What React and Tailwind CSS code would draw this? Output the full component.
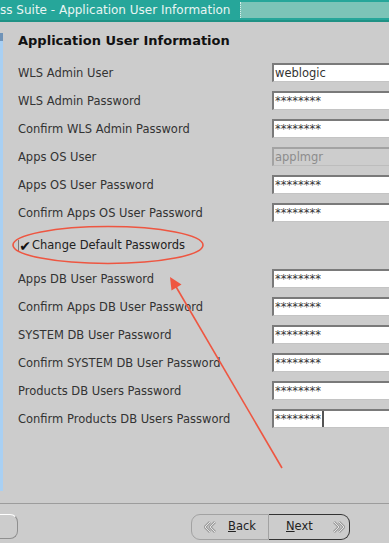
import React from "react";

const fields = [
  { label: "WLS Admin User", value: "weblogic" },
  { label: "WLS Admin Password", value: "********" },
  { label: "Confirm WLS Admin Password", value: "********" },
  { label: "Apps OS User", value: "applmgr", disabled: true },
  { label: "Apps OS User Password", value: "********" },
  { label: "Confirm Apps OS User Password", value: "********" },
];

const dbFields = [
  { label: "Apps DB User Password", value: "********" },
  { label: "Confirm Apps DB User Password", value: "********" },
  { label: "SYSTEM DB User Password", value: "********" },
  { label: "Confirm SYSTEM DB User Password", value: "********" },
  { label: "Products DB Users Password", value: "********" },
  { label: "Confirm Products DB Users Password", value: "********", focused: true },
];

function Field({ label, value, disabled, focused }) {
  return (
    <div className="flex h-[28px] items-center">
      <span className="w-[254px] shrink-0 pt-[3px] text-[11.5px] text-[#333]">{label}</span>
      <div
        className={
          "flex h-[19px] w-[130px] shrink-0 items-stretch border-t-2 border-l-2 border-b pl-[1px] text-[11.5px] leading-[16px] " +
          (disabled
            ? "bg-[#cdcdcd] border-[#a3a3a3] border-b-[#bdbdbd] text-[#8c8c8c]"
            : "bg-white border-[#7a7a7a] border-b-[#c4c4c4] text-[#333]")
        }
      >
        <span>{value}</span>
        {focused && <span className="ml-[1px] w-[2px] bg-[#555]" />}
      </div>
    </div>
  );
}

function Chevrons({ dir }) {
  const pts =
    dir === "left"
      ? ["6,1 1,6 6,11", "11,1 6,6 11,11"]
      : ["1,1 6,6 1,11", "6,1 11,6 6,11"];
  return (
    <svg width="12" height="12" viewBox="0 0 12 12" className="shrink-0">
      {pts.map((p) => (
        <polyline key={p} points={p} fill="none" stroke="#9d9d9d" strokeWidth="2.8" strokeLinejoin="round" />
      ))}
      {pts.map((p) => (
        <polyline key={p + "i"} points={p} fill="none" stroke="#ececec" strokeWidth="0.9" strokeLinejoin="round" />
      ))}
    </svg>
  );
}

export default function App() {
  return (
    <div
      className="relative h-[543px] w-[389px] overflow-hidden bg-[#cccccc]"
      style={{ fontFamily: '"DejaVu Sans", Verdana, sans-serif' }}
    >
      {/* window title */}
      <div className="flex h-[22px] items-center border-b-2 border-[#1f9285] bg-[#26a69a]">
        <span className="shrink-0 text-[12px] text-[#e9f5f3]">ss Suite - Application User Information</span>
        <div className="ml-[10px] h-[16px] flex-1 border-l border-dotted border-[#d8efeb] bg-[#7cc4b8]" />
      </div>

      <div className="flex h-[481px]">
        <div className="mt-[11px] h-[458px] w-[3px] shrink-0 border-t-[8px] border-[#6f93b8] bg-[#a9d0f3]" />
        <div className="flex flex-col pl-[15px] pt-[5px]">
          <h1 className="flex h-[28px] items-center text-[13px] font-bold text-[#111]">
            Application User Information
          </h1>
          <div className="mt-[3px] flex flex-col">
            {fields.map((f) => (
              <Field key={f.label} {...f} />
            ))}
            <div className="flex h-[38px] items-center pt-[2px]">
              <span className="flex h-[12px] w-[13px] items-center justify-center border-l border-[#777] text-[14px] font-bold leading-none text-[#111]">
                ✔
              </span>
              <span className="ml-[1px] text-[11.5px] text-[#222]">Change Default Passwords</span>
            </div>
            {dbFields.map((f) => (
              <Field key={f.label} {...f} />
            ))}
          </div>
        </div>
      </div>

      <div className="h-px bg-[#9c9c9c]" />

      {/* wizard buttons */}
      <div className="flex h-[39px] items-start pt-[10px]">
        <div className="-ml-[22px] h-[25px] w-[40px] rounded-[8px] border border-[#8f8f8f] border-t-white border-l-white" />
        <div className="ml-[173px] flex h-[26px]">
          <button className="flex w-[78px] items-center rounded-l-[9px] border border-[#a2a2a2] pl-[12px] text-[11.5px] text-[#222]">
            <Chevrons dir="left" />
            <span className="ml-[12px]">
              <span className="underline">B</span>ack
            </span>
          </button>
          <button className="flex w-[81px] items-center rounded-r-[9px] border border-l-0 border-[#333] pl-[17px] text-[11.5px] text-[#222]">
            <span>
              <span className="underline">N</span>ext
            </span>
            <span className="ml-[20px]">
              <Chevrons dir="right" />
            </span>
          </button>
        </div>
      </div>

      {/* red annotation */}
      <svg className="pointer-events-none absolute inset-0" width="389" height="543">
        <ellipse cx="108" cy="245" rx="95" ry="18.5" fill="none" stroke="#ee5641" strokeWidth="1.6" />
        <line x1="282" y1="468" x2="175" y2="285" stroke="#ee5641" strokeWidth="1.6" />
        <polygon points="170,277 181.5,284.5 171.5,290.5" fill="#ee5641" />
      </svg>
    </div>
  );
}
